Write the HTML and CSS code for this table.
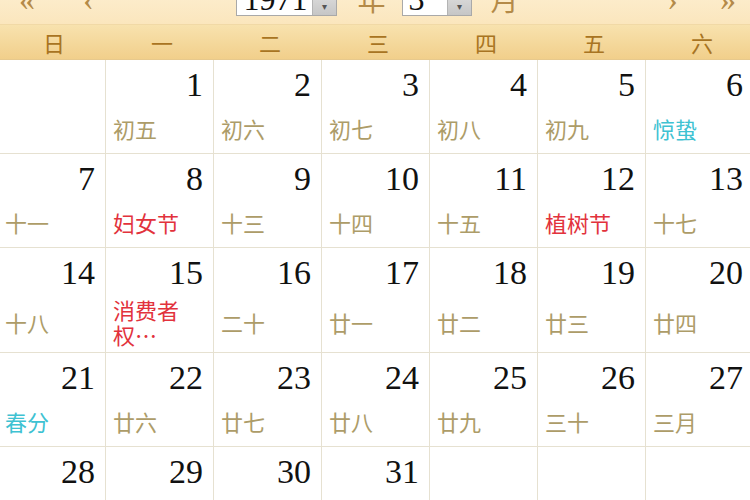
FILE: index.html
```html
<!DOCTYPE html>
<html lang="zh-CN">
<head>
<meta charset="utf-8">
<title>万年历 1971年3月</title>
<link rel="stylesheet" href="styles.css">
</head>
<body>
<div class="cal">
  <div class="nav">
    <div class="nav-left">
      <span class="arrow">«</span>
      <span class="arrow single">‹</span>
    </div>
    <div class="nav-center">
      <div class="select year"><span class="sel-text">1971</span><span class="sel-btn">▾</span></div>
      <span class="unit">年</span>
      <div class="select month"><span class="sel-text">3</span><span class="sel-btn">▾</span></div>
      <span class="unit">月</span>
    </div>
    <div class="nav-right">
      <span class="arrow single">›</span>
      <span class="arrow">»</span>
    </div>
  </div>
  <div class="week">
    <div>日</div><div>一</div><div>二</div><div>三</div><div>四</div><div>五</div><div>六</div>
  </div>
  <div class="days">
    <div class="cell empty"></div>
    <div class="cell"><div class="num">1</div><div class="lunar">初五</div></div>
    <div class="cell"><div class="num">2</div><div class="lunar">初六</div></div>
    <div class="cell"><div class="num">3</div><div class="lunar">初七</div></div>
    <div class="cell"><div class="num">4</div><div class="lunar">初八</div></div>
    <div class="cell"><div class="num">5</div><div class="lunar">初九</div></div>
    <div class="cell"><div class="num">6</div><div class="lunar term">惊蛰</div></div>

    <div class="cell"><div class="num">7</div><div class="lunar">十一</div></div>
    <div class="cell"><div class="num">8</div><div class="lunar fest">妇女节</div></div>
    <div class="cell"><div class="num">9</div><div class="lunar">十三</div></div>
    <div class="cell"><div class="num">10</div><div class="lunar">十四</div></div>
    <div class="cell"><div class="num">11</div><div class="lunar">十五</div></div>
    <div class="cell"><div class="num">12</div><div class="lunar fest">植树节</div></div>
    <div class="cell"><div class="num">13</div><div class="lunar">十七</div></div>

    <div class="cell"><div class="num">14</div><div class="lunar">十八</div></div>
    <div class="cell"><div class="num">15</div><div class="lunar fest"><span>消费者</span><span>权…</span></div></div>
    <div class="cell"><div class="num">16</div><div class="lunar">二十</div></div>
    <div class="cell"><div class="num">17</div><div class="lunar">廿一</div></div>
    <div class="cell"><div class="num">18</div><div class="lunar">廿二</div></div>
    <div class="cell"><div class="num">19</div><div class="lunar">廿三</div></div>
    <div class="cell"><div class="num">20</div><div class="lunar">廿四</div></div>

    <div class="cell"><div class="num">21</div><div class="lunar term">春分</div></div>
    <div class="cell"><div class="num">22</div><div class="lunar">廿六</div></div>
    <div class="cell"><div class="num">23</div><div class="lunar">廿七</div></div>
    <div class="cell"><div class="num">24</div><div class="lunar">廿八</div></div>
    <div class="cell"><div class="num">25</div><div class="lunar">廿九</div></div>
    <div class="cell"><div class="num">26</div><div class="lunar">三十</div></div>
    <div class="cell"><div class="num">27</div><div class="lunar">三月</div></div>

    <div class="cell"><div class="num">28</div><div class="lunar">初二</div></div>
    <div class="cell"><div class="num">29</div><div class="lunar">初三</div></div>
    <div class="cell"><div class="num">30</div><div class="lunar">初四</div></div>
    <div class="cell"><div class="num">31</div><div class="lunar">初五</div></div>
    <div class="cell empty"></div>
    <div class="cell empty"></div>
    <div class="cell empty"></div>
  </div>
</div>
</body>
</html>
```

FILE: styles.css
```css
html, body {
  margin: 0;
  padding: 0;
  background: #ffffff;
  overflow: hidden;
}

body {
  width: 750px;
  height: 500px;
  font-family: "Noto Sans CJK SC", "Noto Sans", sans-serif;
}

.cal {
  width: 756px;
  margin: -22px 0 0 -2px;
}

/* top navigation bar */
.nav {
  height: 47px;
  box-sizing: border-box;
  padding: 4px 18px 0 21px;
  display: grid;
  grid-template-columns: 1fr auto 1fr;
  align-items: start;
  background: linear-gradient(#fdf1d6, #fbe6bd);
  border-bottom: 1px solid #f1d9a6;
}

.nav-left, .nav-right {
  display: flex;
  align-items: center;
  height: 34px;
}

.nav-left { gap: 48px; }
.nav-right { justify-content: flex-end; gap: 42px; }

.arrow {
  font-family: "Liberation Serif", serif;
  font-size: 32px;
  line-height: 34px;
  color: #b48a48;
}

.nav-center {
  display: flex;
  align-items: center;
  height: 34px;
}

.select {
  height: 34px;
  box-sizing: border-box;
  display: flex;
  background: #ffffff;
  border: 1px solid #a9a9a9;
}

.select.year { width: 101px; }
.select.month { width: 70px; }

.sel-text {
  flex: 1;
  padding-left: 6px;
  font-family: "Liberation Serif", serif;
  font-size: 32px;
  line-height: 32px;
  color: #111111;
}

.sel-btn {
  width: 24px;
  box-sizing: border-box;
  border-left: 1px solid #b4b4b4;
  background: linear-gradient(#e8e8e8, #c6c6c6);
  color: #555555;
  font-size: 10px;
  line-height: 46px;
  text-align: center;
}

.unit {
  font-size: 28px;
  line-height: 34px;
  color: #b48a48;
  padding: 0 16px 0 20px;
}

.unit:last-child { padding: 0 0 0 19px; }

/* weekday header */
.week {
  display: grid;
  grid-template-columns: repeat(7, 108px);
  height: 35px;
  box-sizing: border-box;
  background: linear-gradient(#f8e2ae, #f1cf8b);
  border-bottom: 1px solid #e7c98d;
}

.week > div {
  text-align: center;
  font-size: 22px;
  line-height: 34px;
  color: #a87422;
  padding-left: 4px;
}

/* day grid */
.days {
  display: grid;
  grid-template-columns: repeat(7, 108px);
}

.cell {
  box-sizing: border-box;
  border-right: 1px solid #e6e1d1;
  border-bottom: 1px solid #e6e1d1;
  padding-top: 5px;
  display: flex;
  flex-direction: column;
  min-height: 94px;
}

.num {
  height: 40px;
  padding-right: 10px;
  text-align: right;
  font-family: "Liberation Serif", serif;
  font-size: 34px;
  line-height: 40px;
  color: #111111;
}

.lunar {
  flex: 1;
  min-height: 48px;
  box-sizing: border-box;
  padding: 4px 4px 5px 7px;
  display: flex;
  flex-direction: column;
  justify-content: center;
  font-size: 22px;
  line-height: 25px;
  color: #ad9c68;
}

.lunar.fest { color: #e2323c; }
.lunar.term { color: #3ec2d2; }
```
